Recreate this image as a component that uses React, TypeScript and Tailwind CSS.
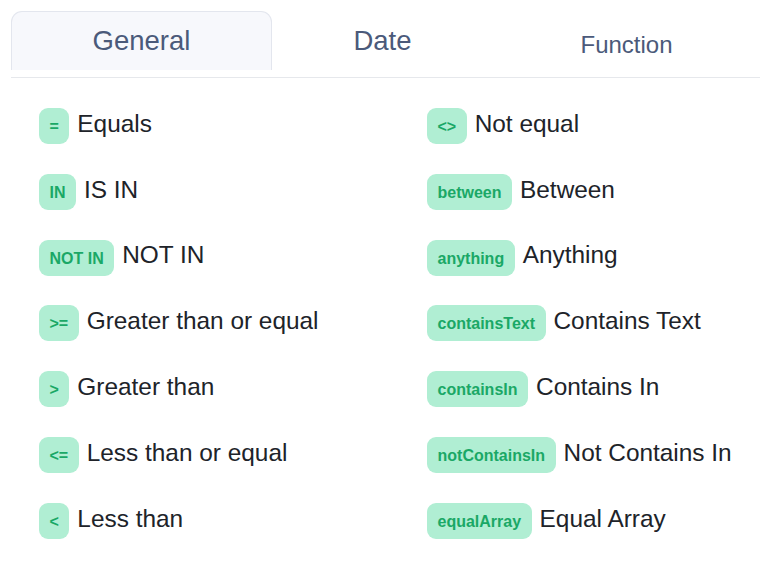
import React from "react";

const left: [string, string][] = [
  ["=", "Equals"],
  ["IN", "IS IN"],
  ["NOT IN", "NOT IN"],
  [">=", "Greater than or equal"],
  [">", "Greater than"],
  ["<=", "Less than or equal"],
  ["<", "Less than"],
];

const right: [string, string][] = [
  ["<>", "Not equal"],
  ["between", "Between"],
  ["anything", "Anything"],
  ["containsText", "Contains Text"],
  ["containsIn", "Contains In"],
  ["notContainsIn", "Not Contains In"],
  ["equalArray", "Equal Array"],
];

function Item({ op, label }: { op: string; label: string }) {
  return (
    <div className="flex items-center h-[36px] gap-[8px]">
      <span className="h-[36px] px-[10.5px] rounded-[9px] bg-[#b0eed3] text-[#1aa866] font-bold text-[16px] flex items-center pt-[2px] whitespace-pre">
        {op}
      </span>
      <span className="text-[24.4px] text-[#202329] leading-none mb-[4px] whitespace-nowrap">{label}</span>
    </div>
  );
}

export default function App() {
  const rows = left.map((l, i) => [l, right[i]] as const);
  return (
    <div className="w-[768px] h-[567px] bg-white overflow-hidden font-['Liberation_Sans',Arial,sans-serif]">
      <div className="pt-[11px] pl-[11px]">
        <div className="w-[749px]">
          <div className="flex items-start h-[67px] border-b border-[#e6e8ec]">
            <div className="w-[261px] h-[59px] bg-[#f7f8fc] border border-b-0 border-[#e3e6ee] rounded-t-[11px] flex items-center justify-center text-[27.5px] text-[#4b5a7a]">
              General
            </div>
            <div className="w-[221px] h-[59px] flex items-center justify-center text-[27.5px] text-[#4b5a7a]">
              Date
            </div>
            <div className="flex-1 h-[59px] flex items-center justify-center pt-[8px] text-[24px] text-[#4b5a7a]">
              Function
            </div>
          </div>
          <div className="pt-[30px] pl-[28px] grid grid-cols-[388px_1fr] gap-y-[29.83px]">
            {rows.map(([l, r], i) => (
              <React.Fragment key={i}>
                <Item op={l[0]} label={l[1]} />
                <Item op={r[0]} label={r[1]} />
              </React.Fragment>
            ))}
          </div>
        </div>
      </div>
    </div>
  );
}
